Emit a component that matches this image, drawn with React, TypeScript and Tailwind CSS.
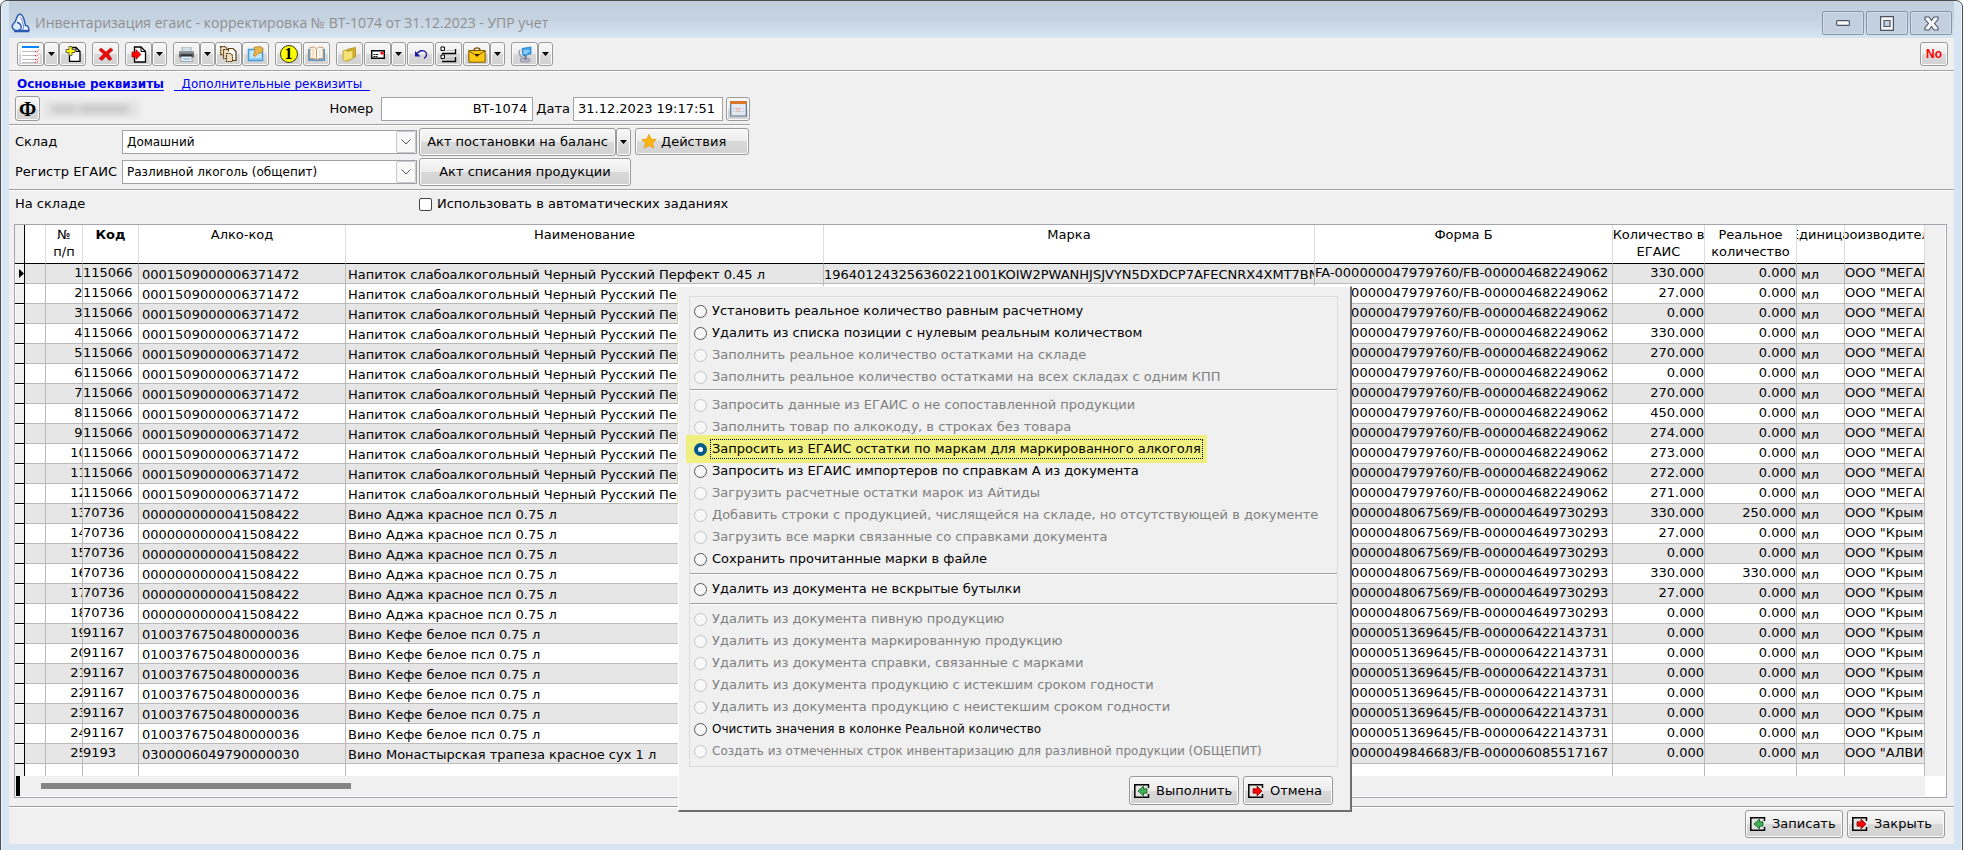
import { useState } from "react";
import type { ReactNode } from "react";

const face =
  "border border-[#9a9a9a] rounded-[3px] shadow-[inset_0_0_0_1px_#fbfbfb] bg-[linear-gradient(#f8f8f8_0%,#ececec_50%,#d9d9d9_50%,#d2d2d2_100%)]";

function Caret() {
  return (
    <svg width="7" height="4" viewBox="0 0 7 4" aria-hidden="true">
      <path d="M0 0h7L3.5 4z" fill="#000" />
    </svg>
  );
}

function ToolButton({
  label,
  menu,
  children,
}: {
  label: string;
  menu?: boolean;
  children: ReactNode;
}) {
  return (
    <div className="flex">
      <button
        aria-label={label}
        className={`${face} flex h-6 w-[27px] items-center justify-center`}
      >
        {children}
      </button>
      {menu && (
        <button
          aria-label={`${label}: меню`}
          className={`${face} flex h-6 w-[15px] items-center justify-center`}
        >
          <Caret />
        </button>
      )}
    </div>
  );
}

function ListIcon() {
  return (
    <svg width="19" height="18" viewBox="0 0 19 18">
      <path fill="#fff" d="M0 0h19v18H0z" />
      <path fill="#0a84ff" d="M1 1h17v2H1z" />
      <path d="M1 6.500h13M1 10.500h13M1 14.500h13M1 17.500h13" stroke="#b9bdc2" />
      <path
        d="M14 6l1.500 1.500L18 4.500M14 10l1.500 1.500L18 8.500M14 14l1.500 1.500L18 12.500M14 17l1.500 .8L18 15.500"
        fill="none"
        stroke="#e01818"
        strokeDasharray="1.500 .8"
      />
    </svg>
  );
}

function NewIcon() {
  return (
    <svg width="16" height="16" viewBox="0 0 16 16">
      <path d="M4.500 15.500V4L8 1.500h3l4 4v10z" fill="#fff" stroke="#000" strokeWidth="1.300" />
      <path d="M11 1.500v4h4" fill="none" stroke="#000" />
      <path d="M4 .5h3v3h3v3H7v3H4v-3H1v-3h3z" fill="#ff0" stroke="#444" strokeWidth=".8" />
    </svg>
  );
}

function CrossIcon() {
  return (
    <svg width="16" height="14" viewBox="0 0 16 14">
      <path d="M3 1l5 4 4.500-4L15 3l-4.500 4L14 12l-3 1.500L8 9.500 4 13.500 1 11.500 5.500 7 1 3z" fill="#e50b0b" stroke="#b00" strokeWidth=".5" />
    </svg>
  );
}

function ImportIcon() {
  return (
    <svg width="16" height="17" viewBox="0 0 16 17">
      <path d="M3.500 16V1H10l4.500 4.500V16z" fill="#fff" stroke="#000" strokeWidth="1.300" />
      <path d="M10 1v4.500h4.500" fill="none" stroke="#000" />
      <path d="M1 6h4V3.500L10 8.500l-5 5V11H1z" fill="#f00" stroke="#800" strokeWidth=".6" />
    </svg>
  );
}

function PrinterIcon() {
  return (
    <svg width="17" height="15" viewBox="0 0 17 15">
      <path d="M4 0h9v5H4z" fill="#cfe0ea" stroke="#8b98a0" strokeWidth=".7" />
      <path d="M1 4.500h15v6H1z" fill="#5b6166" />
      <path d="M1 4.500h15v2H1z" fill="#8e959a" />
      <path d="M3 7.500h11v3H3z" fill="#2e3235" />
      <path d="M3.500 9.500h10l1 5h-12z" fill="#e9eff2" stroke="#889" strokeWidth=".7" />
      <path d="M5 12h7" stroke="#5aa7e0" />
    </svg>
  );
}

function CopiesIcon() {
  return (
    <svg width="17" height="16" viewBox="0 0 17 16">
      <g fill="#efe3c4" stroke="#5a3c0c" strokeWidth="1.200">
        <path d="M.7.700h4.500l2 2v6H.7z" strokeDasharray="2 .6" />
        <path d="M3.500 3.500h5l2 2v7h-7z" strokeDasharray="2 .6" />
        <path d="M8.500 5.500v-3h4.500l3 3v9h-4" fill="#fff" />
        <path d="M6.500 7.500h4l2 2v6h-6z" strokeDasharray="2 .6" />
      </g>
    </svg>
  );
}

function PinIcon() {
  return (
    <svg width="17" height="16" viewBox="0 0 17 16">
      <path d="M1.500 3.500h14v11h-14z" fill="#c4e6fd" stroke="#3d9be0" strokeWidth="1.500" />
      <path d="M3 12h11v2H3z" fill="#8fcbf2" />
      <path d="M7 1.500l6-1 3 2-1 4-4 1-3 3-1.500-1L8 5.500z" fill="#eab54c" stroke="#b57b12" strokeWidth=".8" />
    </svg>
  );
}

function CoinIcon() {
  return (
    <span className="flex size-[18px] items-center justify-center rounded-full border border-[#333] bg-[#ffff00] font-['Liberation_Serif',serif] text-base leading-none font-bold">
      1
    </span>
  );
}

function BookIcon() {
  return (
    <svg width="17" height="16" viewBox="0 0 17 16">
      <path d="M.5 3v11.500h7l1 .8 1-.8h7V3" fill="#6fa8d6" stroke="#4a86b8" strokeWidth=".8" />
      <path d="M2 1.500l4-.5 2.500 2v11l-2.500-1.500H2z" fill="#fff5e6" stroke="#c98f5c" strokeWidth=".9" />
      <path d="M15 1.500l-4-.5-2.500 2v11l2.500-1.500h4z" fill="#fff" stroke="#c98f5c" strokeWidth=".9" />
      <path d="M5 3v8M12 3v8" stroke="#dcb98f" strokeWidth=".7" />
    </svg>
  );
}

function FolderIcon() {
  return (
    <svg width="15" height="15" viewBox="0 0 15 15">
      <path d="M5 2.500L13.500.5v9l-8 4.500z" fill="#d8b32c" stroke="#a98a10" strokeWidth=".8" />
      <path d="M1 4l3-1 1.500 1.500L11 3v8.500L3 14.500 1 12z" fill="#f7e277" stroke="#b89a1a" strokeWidth=".8" />
    </svg>
  );
}

function MailIcon() {
  return (
    <svg width="14" height="9" viewBox="0 0 14 9">
      <path d="M.7.700h12.600v7.600H.7z" fill="#fff" stroke="#000" strokeWidth="1.400" />
      <path d="M9.500 2h3v2.500h-3z" fill="#f00" />
      <path d="M2.500 4.500h5M2.500 6.500h4" stroke="#000" strokeDasharray="2 .6" />
    </svg>
  );
}

function UndoIcon() {
  return (
    <svg width="14" height="11" viewBox="0 0 14 11">
      <path d="M2 6C5 1 10 .5 12 3.500c1.500 3-.5 5-2 6" fill="none" stroke="#1a1aa0" strokeWidth="1.300" />
      <path d="M1 2v5.500h5.500z" fill="#1a1aa0" />
    </svg>
  );
}

function TreeIcon() {
  return (
    <svg width="17" height="17" viewBox="0 0 17 17">
      <path d="M1 1h3.500v3.500H1zM1 9h3.500v3.500H1z" fill="#fff" stroke="#000" />
      <path d="M2 7.500h13.500V3M2 15.500h13.500V11" fill="none" stroke="#000" strokeWidth="1.400" />
      <path d="M6 4.500h8M6 12.500h8" stroke="#bbb" />
    </svg>
  );
}

function CaseIcon() {
  return (
    <svg width="18" height="17" viewBox="0 0 18 17">
      <path d="M6 4.500C6 1 12 1 12 4.500" fill="none" stroke="#7a5500" strokeWidth="1.400" />
      <path d="M.8 4.500h16.400v11.700H.8z" fill="#fbc814" stroke="#7a5500" />
      <path d="M1 5l6.500 4h3L17 5" fill="none" stroke="#7a5500" />
      <path d="M6.500 8h5L9 11z" fill="#2d1d00" />
    </svg>
  );
}

function NetIcon() {
  return (
    <svg width="16" height="17" viewBox="0 0 16 17">
      <path d="M3 13c3-1 8-1 10 0l-1 3H4z" fill="#b9bccb" stroke="#7d8198" strokeWidth=".7" />
      <path d="M7 9h3v5H7z" fill="#858ba0" />
      <path d="M3 4c-2 3 0 6 3 8" fill="none" stroke="#9aa2b8" strokeWidth="1.500" />
      <path d="M5 2.500L14 1v7l-8 1.500z" fill="#43a6ee" stroke="#1c7cc6" strokeWidth=".8" />
      <path d="M6.500 5h6M6.500 7h4" stroke="#d8f0ff" />
    </svg>
  );
}

function CalendarIcon() {
  return (
    <svg width="17" height="16" viewBox="0 0 17 16">
      <path d="M.7 1h15.600v14H.7z" fill="#e3e9ee" stroke="#5b7593" strokeWidth="1.200" />
      <path d="M0 0h17v3H0z" fill="#d8762c" />
      <path d="M3 7.500h11M3 10.500h11" stroke="#b6cadb" strokeDasharray="1.500 1" />
      <path d="M7 7.500h2.500v2.500H7z" fill="#fff" stroke="#ee9c90" strokeWidth=".8" />
    </svg>
  );
}

function StarIcon() {
  return (
    <svg width="16" height="15" viewBox="0 0 16 15">
      <path d="M8 .5l2.200 4.600 5 .5-3.700 3.400 1.200 5L8 11.500 3.300 14l1.200-5L.8 5.600l5-.5z" fill="#fbb30f" stroke="#e59a00" strokeWidth=".7" />
    </svg>
  );
}

function DoorIcon({ out }: { out?: boolean }) {
  return (
    <svg width="16" height="14" viewBox="0 0 16 14" aria-hidden="true">
      <path d="M14.500 4V.8H.8v12.400h13.700V10" fill="#e4e4e4" stroke="#000" strokeWidth="1.500" />
      {out ? (
        <path d="M5 4.800h4V2l5 5-5 5V9.200H5z" fill="#f00" stroke="#700" strokeWidth=".7" />
      ) : (
        <path d="M13 4.800H9.500V2L4 7l5.500 5V9.200H13z" fill="#3fb255" stroke="#0a4a1a" strokeWidth=".7" />
      )}
    </svg>
  );
}

function DropArrow() {
  return (
    <span className="pointer-events-none absolute top-px right-px bottom-px flex w-5 items-center justify-center rounded-[2px] border border-[#c8c8c8] bg-[#f8f8f8]">
      <svg width="10" height="6" viewBox="0 0 10 6" aria-hidden="true">
        <path d="M.5.500L5 5 9.500.500" fill="none" stroke="#555" />
      </svg>
    </span>
  );
}

function Rule() {
  return <div className="h-[2px] border-t border-[#a0a0a0] bg-white" />;
}

const napitok = {
  code: "115066",
  alco: "0001509000006371472",
  name: "Напиток слабоалкогольный Черный Русский Перфект 0.45 л",
  form: "FA-000000047979760/FB-000004682249062",
  maker: 'ООО "МЕГАПАК"',
};
const adja = {
  code: "70736",
  alco: "0000000000041508422",
  name: "Вино Аджа красное псл 0.75 л",
  form: "FA-000000048067569/FB-000004649730293",
  maker: 'ООО "Крымский',
};
const kefe = {
  code: "91167",
  alco: "0100376750480000036",
  name: "Вино Кефе белое псл 0.75 л",
  form: "FA-000000051369645/FB-000006422143731",
  maker: 'ООО "Крымский',
};
const monastyr = {
  code: "9193",
  alco: "0300006049790000030",
  name: "Вино Монастырская трапеза красное сух 1 л",
  form: "FA-000000049846683/FB-000006085517167",
  maker: 'ООО "АЛВИСА"',
};

const rows = [
  ...["330.000", "27.000", "0.000", "330.000", "270.000", "0.000", "270.000", "450.000", "274.000", "273.000", "272.000", "271.000"].map(
    (qty) => ({ ...napitok, qty, real: "0.000" })
  ),
  { ...adja, qty: "330.000", real: "250.000" },
  { ...adja, qty: "27.000", real: "0.000" },
  { ...adja, qty: "0.000", real: "0.000" },
  { ...adja, qty: "330.000", real: "330.000" },
  { ...adja, qty: "27.000", real: "0.000" },
  { ...adja, qty: "0.000", real: "0.000" },
  ...Array.from({ length: 6 }, () => ({ ...kefe, qty: "0.000", real: "0.000" })),
  { ...monastyr, qty: "0.000", real: "0.000" },
];

const groups = [
  [
    ["Установить реальное количество равным расчетному", true],
    ["Удалить из списка позиции с нулевым реальным количеством", true],
    ["Заполнить реальное количество остатками на складе", false],
    ["Заполнить реальное количество остатками на всех складах с одним КПП", false],
  ],
  [
    ["Запросить данные из ЕГАИС о не сопоставленной продукции", false],
    ["Заполнить товар по алкокоду, в строках без товара", false],
    ["Запросить из ЕГАИС остатки по маркам для маркированного алкоголя", true],
    ["Запросить из ЕГАИС импортеров по справкам А из документа", true],
    ["Загрузить расчетные остатки марок из Айтиды", false],
    ["Добавить строки с продукцией, числящейся на складе, но отсутствующей в документе", false],
    ["Загрузить все марки связанные со справками документа", false],
    ["Сохранить прочитанные марки в файле", true],
  ],
  [["Удалить из документа не вскрытые бутылки", true]],
  [
    ["Удалить из документа пивную продукцию", false],
    ["Удалить из документа маркированную продукцию", false],
    ["Удалить из документа справки, связанные с марками", false],
    ["Удалить из документа продукцию с истекшим сроком годности", false],
    ["Удалить из документа продукцию с неистекшим сроком годности", false],
    ["Очистить значения в колонке Реальной количество", true],
    ["Создать из отмеченных строк инвентаризацию для разливной продукции (ОБЩЕПИТ)", false],
  ],
] as [string, boolean][][];

const compact = [groups[3][5][0], groups[3][6][0]];

function TitleBar() {
  const box =
    "flex h-6 w-[42px] items-center justify-center rounded-[2px] border border-[#8595ad] bg-[#c3d0e0] shadow-[inset_0_0_0_1px_#d3deea]";
  return (
    <header className="flex h-[37px] items-start justify-between bg-[linear-gradient(#c0cddb_0%,#c6d3e1_50%,#d7e4f2_100%)] pr-[2px] pl-[2px]">
      <div className="flex items-center gap-[5px] pt-3">
        <svg width="19" height="20" viewBox="0 0 19 20" aria-hidden="true">
          <path d="M8 1.500c2-1 4 1 5 5l1.500 6c2 0 3.500 2 3.500 5H5" fill="#f4f8ff" stroke="#2a57b0" strokeWidth="1.400" />
          <path d="M8 1.500C5 3 6 7 3 10c-3 3-2 7 2 7.500 4 0 6-2 5-5-1-2-2-3-4-3" fill="#dce9fb" stroke="#2a57b0" strokeWidth="1.400" />
          <path d="M9 4c2 1 2 4 3 7s1 5-1 6" fill="none" stroke="#5b86d6" />
          <path d="M3 18.500h15" stroke="#2a57b0" strokeWidth="1.500" />
        </svg>
        <h1 className="font-['Open_Sans','Noto_Sans',sans-serif] text-sm leading-5 text-[#8f8f8f]">
          Инвентаризация егаис - корректировка № ВТ-1074 от 31.12.2023 - УПР учет
        </h1>
      </div>
      <div className="flex gap-[2px] pt-[10px]">
        <button aria-label="Свернуть" className={box}>
          <svg width="14" height="6" viewBox="0 0 14 6">
            <rect x=".6" y=".6" width="12.800" height="4.800" rx="1" fill="#fafafa" stroke="#4c5565" strokeWidth="1.200" />
          </svg>
        </button>
        <button aria-label="Развернуть" className={box}>
          <svg width="14" height="15" viewBox="0 0 14 15">
            <path d="M.6.600h12.800v13.800H.6zM4 4.500v6h6v-6z" fill="#f6f6f6" fillRule="evenodd" stroke="#4c5565" strokeWidth="1.200" />
          </svg>
        </button>
        <button aria-label="Закрыть окно" className={box}>
          <svg width="15" height="15" viewBox="0 0 15 15">
            <path d="M1 1h4l2.500 3.500L10 1h4v2.500L10.500 7.500 14 11.500V14h-4l-2.500-3.500L5 14H1v-2.500l3.500-4L1 3.500z" fill="#f6f6f6" stroke="#4c5565" strokeWidth="1.100" />
          </svg>
        </button>
      </div>
    </header>
  );
}

function Toolbar() {
  return (
    <div className="flex h-8 items-center justify-between pr-[6px] pl-2">
      <div className="flex gap-[6px]">
        <div className="flex">
          <ToolButton label="Список" menu><ListIcon /></ToolButton>
          <ToolButton label="Создать"><NewIcon /></ToolButton>
        </div>
        <ToolButton label="Удалить"><CrossIcon /></ToolButton>
        <ToolButton label="Загрузить" menu><ImportIcon /></ToolButton>
        <div className="flex">
          <ToolButton label="Печать" menu><PrinterIcon /></ToolButton>
          <ToolButton label="Копировать"><CopiesIcon /></ToolButton>
          <ToolButton label="Закрепить"><PinIcon /></ToolButton>
        </div>
        <div className="flex gap-px">
          <ToolButton label="Один"><CoinIcon /></ToolButton>
          <ToolButton label="Справочник"><BookIcon /></ToolButton>
        </div>
        <div className="flex gap-px">
          <ToolButton label="Папка"><FolderIcon /></ToolButton>
          <ToolButton label="Почта" menu><MailIcon /></ToolButton>
          <ToolButton label="Отменить"><UndoIcon /></ToolButton>
          <ToolButton label="Дерево"><TreeIcon /></ToolButton>
          <ToolButton label="Портфель" menu><CaseIcon /></ToolButton>
        </div>
        <ToolButton label="Обмен" menu><NetIcon /></ToolButton>
      </div>
      <button className={`${face} h-6 w-7 font-['Liberation_Sans',sans-serif] text-xs leading-none font-bold text-[#f00]`}>
        No
      </button>
    </div>
  );
}

function Form() {
  const select = "h-6 w-full appearance-none border border-[#a0a0a8] bg-white pl-1 text-xs";
  return (
    <>
      <nav className="flex h-6 items-center gap-[10px] pl-2 text-[#0000f0] underline underline-offset-2">
        <a href="#main" className="text-xs font-bold">Основные реквизиты</a>
        <a href="#extra" className="text-xs whitespace-pre">{"  Дополнительные реквизиты  "}</a>
      </nav>
      <div className="flex w-[741px] items-center pl-[6px]">
        <button className={`${face} h-[25px] w-[25px] font-['Liberation_Serif',serif] text-xl leading-none font-bold`}>Ф</button>
        <div className="ml-1 flex h-4 w-[95px] items-center gap-1 bg-[#e2e2e2] px-2 blur-[3px]">
          <span className="h-2 w-6 bg-[#cbcbcb]" />
          <span className="h-2 w-12 bg-[#c6c6c6]" />
        </div>
        <label htmlFor="number" className="ml-auto pr-2">Номер</label>
        <input id="number" defaultValue="ВТ-1074" className="h-6 w-[152px] border border-[#a0a0a8] bg-white pr-[5px] text-right" />
        <label htmlFor="date" className="px-[3px]">Дата</label>
        <input id="date" defaultValue="31.12.2023 19:17:51" className="h-6 w-[150px] border border-[#a0a0a8] bg-white pl-1" />
        <button aria-label="Календарь" className={`${face} ml-[3px] flex h-6 w-6 items-center justify-center`}><CalendarIcon /></button>
      </div>
      <div className="w-[741px] pt-[3px]"><Rule /></div>
      <div className="grid grid-cols-[105px_295px_212px_116px] gap-x-[2px] gap-y-[2px] pt-[2px] pl-[6px]">
        <label htmlFor="store" className="self-center">Склад</label>
        <div className="relative self-center">
          <select id="store" className={select}><option>Домашний</option></select>
          <DropArrow />
        </div>
        <div className="flex">
          <button className={`${face} h-7 flex-1 whitespace-nowrap`}>Акт постановки на баланс</button>
          <button aria-label="Акт постановки: меню" className={`${face} flex h-7 w-[15px] items-center justify-center`}><Caret /></button>
        </div>
        <button className={`${face} ml-[2px] flex h-[27px] items-center gap-1 pl-[5px]`}><StarIcon />Действия</button>
        <label htmlFor="register" className="self-center whitespace-nowrap">Регистр ЕГАИС</label>
        <div className="relative self-center">
          <select id="register" className={select}><option>Разливной лкоголь (общепит)</option></select>
          <DropArrow />
        </div>
        <button className={`${face} h-7`}>Акт списания продукции</button>
      </div>
      <div className="pt-[3px]"><Rule /></div>
      <div className="flex h-[33px] items-start pt-[5px] pl-[6px]">
        <span className="w-[404px]">На складе</span>
        <label className="flex items-center gap-[5px]">
          <input type="checkbox" className="size-[13px] appearance-none rounded-[2px] border border-[#444] bg-white" />
          Использовать в автоматических заданиях
        </label>
      </div>
    </>
  );
}

function Head({ lines, bold }: { lines: string[]; bold?: boolean }) {
  return (
    <th className={`overflow-hidden border-r border-b border-r-[#dcdcdc] border-b-black p-0 align-top ${bold ? "font-bold" : "font-normal"}`}>
      {lines.map((line) => (
        <div key={line} className="flex h-[17px] justify-center pt-px leading-[17px] whitespace-nowrap">{line}</div>
      ))}
    </th>
  );
}

function Grid() {
  const cell = "h-5 overflow-hidden border-r border-b border-[#bababa] p-0 align-top";
  const high = "h-[19px] overflow-hidden leading-[18px] whitespace-nowrap";
  const low = "h-[19px] overflow-hidden leading-[22px] whitespace-nowrap";
  const mark = "h-5 border-r border-b border-black bg-[#f0f0f0] p-0 shadow-[inset_1px_1px_0_#fff]";
  return (
    <section className="mr-[7px] ml-[5px] flex flex-1 flex-col border border-[#a5a5ad] bg-white">
      <div className="flex flex-1">
        <table className="w-full flex-1 table-fixed border-separate border-spacing-0">
          <colgroup>
            <col className="w-[10px]" />
            <col className="w-[21px]" />
            <col className="w-[37px]" />
            <col className="w-[56px]" />
            <col className="w-[207px]" />
            <col className="w-[478px]" />
            <col />
            <col className="w-[298px]" />
            <col className="w-[92px]" />
            <col className="w-[92px]" />
            <col className="w-[48px]" />
            <col className="w-[80px]" />
          </colgroup>
          <thead>
            <tr className="h-[39px]">
              <th className="border-r border-b border-r-black border-b-black bg-[#f0f0f0] p-0" />
              <Head lines={[]} />
              <Head lines={["№", "п/п"]} />
              <Head lines={["Код"]} bold />
              <Head lines={["Алко-код"]} />
              <Head lines={["Наименование"]} />
              <Head lines={["Марка"]} />
              <Head lines={["Форма Б"]} />
              <Head lines={["Количество в", "ЕГАИС"]} />
              <Head lines={["Реальное", "количество"]} />
              <Head lines={["Единица"]} />
              <Head lines={["Производитель"]} />
            </tr>
          </thead>
          <tbody>
            {rows.map((row, i) => (
              <tr key={i} className="odd:bg-[#e6e6e6]">
                <td className={mark}>
                  {i === 0 && (
                    <svg width="5" height="9" viewBox="0 0 5 9" className="ml-1">
                      <path d="M0 0l5 4.500L0 9z" />
                    </svg>
                  )}
                </td>
                <td className={cell} />
                <td className={cell}>
                  <div className={`${high} flex justify-center pl-[29px]`}>{i + 1}</div>
                </td>
                <td className={cell}><div className={high}>{row.code}</div></td>
                <td className={cell}><div className={`${low} pl-[3px]`}>{row.alco}</div></td>
                <td className={cell}><div className={`${low} pl-[2px]`}>{row.name}</div></td>
                <td className={cell}>
                  <div className={low}>{i === 0 && "196401243256360221001KOIW2PWANHJSJVYN5DXDCP7AFECNRX4XMT7BN"}</div>
                </td>
                <td className={cell}><div className={high}>{row.form}</div></td>
                <td className={cell}><div className={`${high} text-right`}>{row.qty}</div></td>
                <td className={cell}><div className={`${high} text-right`}>{row.real}</div></td>
                <td className={cell}><div className={`${low} pl-1`}>мл</div></td>
                <td className={cell}><div className={high}>{row.maker}</div></td>
              </tr>
            ))}
            <tr>
              <td className="h-3 border-r border-black bg-[#f0f0f0] p-0" />
              {Array.from({ length: 11 }, (_, i) => (
                <td key={i} className="border-r border-[#bababa] p-0" />
              ))}
            </tr>
          </tbody>
        </table>
        <div className="mr-px w-[20px] bg-[#f0f0f0]" />
      </div>
      <div className="mr-[21px] mb-px flex h-5 items-center bg-[#f0f0f0]">
        <span className="ml-px h-5 w-1 bg-black" />
        <span className="ml-[21px] h-[6px] w-[310px] bg-[#858585]" />
      </div>
    </section>
  );
}

function Dialog() {
  const [picked, setPicked] = useState(groups[1][2][0]);
  return (
    <div
      role="dialog"
      aria-label="Действия"
      className="absolute top-[285px] left-[677px] w-[674px] border-t border-r-2 border-b-2 border-l border-t-white border-r-[#6e6e6e] border-b-[#6e6e6e] border-l-white bg-[#f0f0f0] px-[10px] pt-[9px] pb-[5px]"
    >
      <div role="radiogroup" className="w-[649px] border border-[#dcdcdc] pt-[3px] pb-1">
        {groups.map((items, g) => (
          <div key={g}>
            {g > 0 && <div className={g === 1 ? "pt-px pb-[3px]" : "py-[3px]"}><Rule /></div>}
            {items.map(([text, enabled]) => (
              <div key={text} className="flex h-[22px] items-center">
                <label
                  className={`flex items-center gap-[3px] whitespace-nowrap ${
                    picked === text ? "-ml-1 bg-[#f0f080] py-1 pr-1 pl-2" : "pl-1"
                  } ${enabled ? "" : "text-[#808080]"} ${compact.includes(text) ? "text-xs" : ""}`}
                >
                  <input
                    type="radio"
                    name="action"
                    disabled={!enabled}
                    checked={picked === text}
                    onChange={() => setPicked(text)}
                    className="size-[13px] shrink-0 appearance-none rounded-full border border-[#555] bg-[#f8f8f8] checked:border-4 checked:border-[#005a88] checked:bg-white disabled:border-[#c4c4c4]"
                  />
                  <span className={`border border-dotted px-px leading-[18px] ${picked === text ? "border-black" : "border-transparent"}`}>
                    {text}
                  </span>
                </label>
              </div>
            ))}
          </div>
        ))}
      </div>
      <div className="flex justify-end gap-1 pt-[9px] pr-[7px]">
        <button className={`${face} flex h-[29px] w-[110px] items-center gap-[6px] pl-1`}><DoorIcon />Выполнить</button>
        <button className={`${face} flex h-[29px] w-[90px] items-center gap-[6px] pl-1`}><DoorIcon out />Отмена</button>
      </div>
    </div>
  );
}

export default function App() {
  return (
    <div className="relative flex min-h-screen flex-col rounded-t-[7px] border border-[#4d4d4d] bg-[#d7e4f2] px-2 pb-2 font-['DejaVu_Sans',Verdana,sans-serif] text-[13px] leading-4 text-black shadow-[inset_0_0_0_1px_#eef4fa]">
      <TitleBar />
      <main className="flex flex-1 flex-col bg-[#f0f0f0]">
        <Toolbar />
        <Rule />
        <Form />
        <Grid />
        <div className="pt-2"><Rule /></div>
        <footer className="flex justify-end gap-1 pt-[2px] pr-[9px] pb-[6px]">
          <button className={`${face} flex h-7 w-[98px] items-center gap-[6px] pl-1`}><DoorIcon />Записать</button>
          <button className={`${face} flex h-7 w-[98px] items-center gap-[6px] pl-1`}><DoorIcon out />Закрыть</button>
        </footer>
      </main>
      <Dialog />
    </div>
  );
}
